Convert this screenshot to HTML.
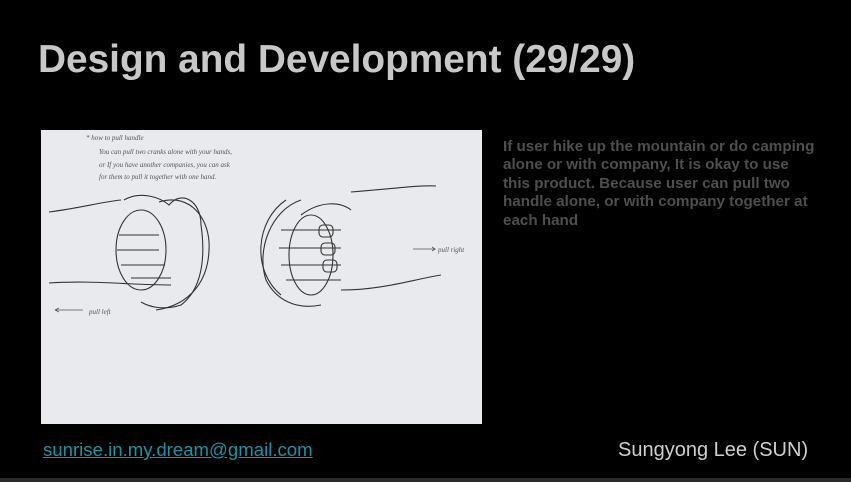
<!DOCTYPE html>
<html><head><meta charset="utf-8"><style>
html,body{margin:0;padding:0;background:#000;width:851px;height:482px;overflow:hidden;position:relative;font-family:"Liberation Sans",Arial,sans-serif}
h1{position:absolute;left:38px;top:38px;margin:0;font-size:38.8px;font-weight:bold;color:#c8c8c8}
.img{position:absolute;left:41px;top:130px;width:441px;height:294px;background:#e8eaed}
.txt{position:absolute;left:503px;top:138px;white-space:nowrap;font-size:15.2px;font-weight:bold;color:#4e4e4e;line-height:18.4px}
.mail{position:absolute;left:43px;top:439px;font-size:18.6px;color:#1a94a6;text-decoration:underline}
.name{position:absolute;left:618px;top:439px;font-size:20px;color:#cfcfcf}
.bar{position:absolute;left:0;top:478px;width:851px;height:4px;background:#2a2a2a}
</style></head><body>
<h1>Design and Development (29/29)</h1>
<div class="img">
<svg width="441" height="294" viewBox="0 0 441 294" fill="none" stroke="#555" stroke-width="0.8" font-family="Liberation Serif,serif" font-style="italic">
<g fill="#555" stroke="none" font-size="7">
<text x="45" y="10">*  how to pull handle</text>
<text x="58" y="24">You can pull two cranks alone with your hands,</text>
<text x="58" y="37">or If you have another companies, you can ask</text>
<text x="58" y="49">for them to pull it together with one hand.</text>
<text x="48" y="184">pull left</text>
<text x="397" y="122">pull right</text>
</g>
<path d="M14 180 L42 180 M14 180 l4 -2 M14 180 l4 2"/>
<path d="M372 119 L394 119 l-3 -2 M394 119 l-3 2"/>
<g stroke="#333" stroke-width="1.1">
<path d="M8 82 C40 78 60 72 80 70 M8 153 C50 150 90 155 130 155"/>
<path d="M83 70 C100 60 120 68 128 75 C140 60 160 70 160 95 C165 130 160 160 140 175 C125 180 110 178 100 172"/>
<path d="M118 72 C150 62 170 90 168 120 C167 150 150 175 115 180"/>
<path d="M78 105 h40 M76 120 h42 M80 135 h44 M90 148 h40"/>
<ellipse cx="100" cy="120" rx="25" ry="40"/>
<path d="M310 62 C360 58 380 55 395 56 M300 160 C340 160 370 150 400 145"/>
<path d="M260 70 C230 80 215 120 225 150 C235 170 255 180 280 175"/>
<path d="M245 70 C215 90 210 140 240 165"/>
<path d="M260 85 C280 70 300 72 310 80 M240 100 h60 M238 118 h62 M240 135 h60 M245 150 h55"/>
<rect x="278" y="95" width="14" height="12" rx="4"/><rect x="280" y="113" width="14" height="12" rx="4"/>
<rect x="282" y="130" width="14" height="12" rx="4"/>
<ellipse cx="270" cy="125" rx="22" ry="40"/>
</g>
</svg>
</div>
<div class="txt">If user hike up the mountain or do camping<br>alone or with company, It is okay to use<br>this product. Because user can pull two<br>handle alone, or with company together at<br>each hand</div>
<div class="mail">sunrise.in.my.dream@gmail.com</div>
<div class="name">Sungyong Lee (SUN)</div>
<div class="bar"></div>
</body></html>
